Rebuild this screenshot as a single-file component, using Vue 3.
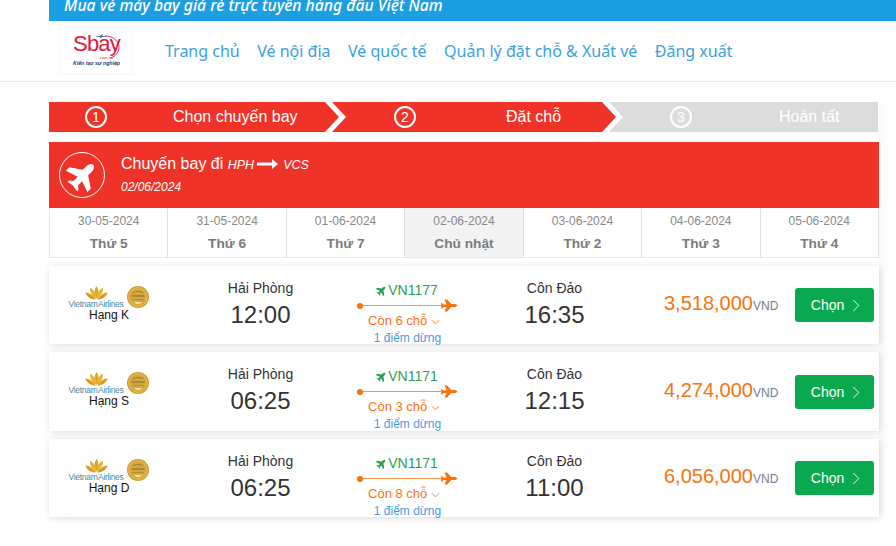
<template>
  <div class="page">
    <div class="banner">Mua vé máy bay giá rẻ trực tuyến hàng đầu Việt Nam</div>

    <header class="nav">
      <div class="logo">
        <svg class="logo-arc" viewBox="0 0 73 48" width="73" height="48">
          <path d="M45 9 C54 9 60 15 59 22 C58 27 54 30 50 31" fill="none" stroke="#e3173e" stroke-width="0.9" />
          <path d="M36 9.500l4-.5 2-1.800h1l-1 1.800 3 .1 .7-.9h.5l-.2 1.300-4 .4-1.100 1.400h-1l.5-1.400-4.400 0z" fill="#3c6a9c" />
        </svg>
        <span class="logo-name">Sbay</span>
        <span class="logo-com">com.vn</span>
        <span class="logo-sub">Kiến tạo sự nghiệp</span>
      </div>
      <a v-for="link in links" :key="link" class="nav-link">{{ link }}</a>
    </header>

    <main class="content">
      <div class="steps">
        <div class="step step-1">
          <span class="num">1</span>
          <span class="step-label">Chọn chuyến bay</span>
        </div>
        <div class="step step-2">
          <span class="num">2</span>
          <span class="step-label">Đặt chỗ</span>
        </div>
        <div class="step step-3">
          <span class="num">3</span>
          <span class="step-label">Hoàn tất</span>
        </div>
      </div>

      <section class="route">
        <div class="route-icon">
          <svg viewBox="0 0 24 24" width="33" height="33">
            <path :d="planePath" fill="#fff" transform="rotate(45 12 12)" />
          </svg>
        </div>
        <div class="route-text">
          <div class="route-title">
            Chuyến bay đi <i>HPH</i>
            <svg class="route-arrow" viewBox="0 0 21 10" width="21" height="10">
              <path d="M0 3.500h15V0l6 5-6 5V6.500H0z" fill="#fff" />
            </svg>
            <i>VCS</i>
          </div>
          <div class="route-date">02/06/2024</div>
        </div>
      </section>

      <div class="dates">
        <div v-for="d in dates" :key="d.date" class="date-cell" :class="{ active: d.active }">
          <div class="date-day">{{ d.date }}</div>
          <div class="date-name">{{ d.name }}</div>
        </div>
      </div>

      <article v-for="f in flights" :key="f.cls" class="flight">
        <div class="airline">
          <div class="airline-top">
            <div class="va">
              <svg viewBox="0 0 24 15" width="23" height="14">
                <path d="M12 0c2 3 2.600 6 1.500 9L12 14l-1.500-5C9.400 6 10 3 12 0z" fill="#e0a526" />
                <path d="M5 2c3 1 5.500 4 6.300 8l.4 4C8 12 5 8 5 2zM19 2c-3 1-5.500 4-6.300 8l-.4 4C16 12 19 8 19 2z" fill="#e8b32f" />
                <path d="M0 7c4 0 8 3 11 7.500C6 14.500 2 12 0 7zM24 7c-4 0-8 3-11 7.500C18 14.500 22 12 24 7z" fill="#d99a1e" />
              </svg>
              <span class="va-name">Vietnam Airlines</span>
            </div>
            <svg class="badge" viewBox="0 0 22 22" width="22" height="22">
              <circle cx="11" cy="11" r="11" fill="#cf9c2c" />
              <circle cx="11" cy="11" r="9.300" fill="#d5a83e" stroke="#eccb70" stroke-width="0.7" />
              <path d="M6 6.800c3-1.800 7-1.800 10 0" fill="none" stroke="#80611b" stroke-width="1" stroke-dasharray="1 .8" />
              <path d="M4.500 10h13" stroke="#95732a" stroke-width="1.200" />
              <path d="M5 13.500h12" stroke="#a98634" stroke-width="0.8" />
              <path d="M7 16h8c-1 1.500-2.500 2-4 2s-3-.5-4-2z" fill="#f4e1a4" />
            </svg>
          </div>
          <div class="class-name">Hạng {{ f.cls }}</div>
        </div>

        <div class="place">
          <div class="city">Hải Phòng</div>
          <div class="time">{{ f.from }}</div>
        </div>

        <div class="middle">
          <div class="code">
            <svg viewBox="0 0 24 24" width="11" height="11">
              <path :d="planePath" fill="#2f9e55" transform="rotate(45 12 12)" />
            </svg>
            {{ f.code }}
          </div>
          <div class="line">
            <svg viewBox="0 0 24 24" width="18" height="13" class="line-plane" preserveAspectRatio="none">
              <path :d="planePath" fill="#f7730e" transform="rotate(90 12 12)" />
            </svg>
          </div>
          <div class="seats">
            Còn {{ f.seats }} chỗ
            <svg viewBox="0 0 10 6" width="9" height="6"><path d="M1 1l4 4 4-4" fill="none" stroke="#f7730e" stroke-width="1" /></svg>
          </div>
          <div class="stops">1 điểm dừng</div>
        </div>

        <div class="place">
          <div class="city">Côn Đảo</div>
          <div class="time">{{ f.to }}</div>
        </div>

        <div class="price">{{ f.price }}<span class="cur">VND</span></div>

        <button class="pick">
          Chọn
          <svg viewBox="0 0 8 14" width="8" height="13"><path d="M1 1l6 6-6 6" fill="none" stroke="#fff" stroke-width="1" /></svg>
        </button>
      </article>
    </main>
  </div>
</template>

<script setup>
// fat plane, nose up; rotated where it's used
const planePath =
  "M12 1c1.600 0 2.800 2 2.800 4.500V9l8.200 5.500V18l-8.200-2.800v4.300l2.600 2V23L12 22l-4.400 1v-1.500l2.600-2v-4.300L1 18v-3.500L9.200 9V5.500C9.200 3 10.400 1 12 1z";

const links = ["Trang chủ", "Vé nội địa", "Vé quốc tế", "Quản lý đặt chỗ & Xuất vé", "Đăng xuất"];

const dates = [
  { date: "30-05-2024", name: "Thứ 5" },
  { date: "31-05-2024", name: "Thứ 6" },
  { date: "01-06-2024", name: "Thứ 7" },
  { date: "02-06-2024", name: "Chủ nhật", active: true },
  { date: "03-06-2024", name: "Thứ 2" },
  { date: "04-06-2024", name: "Thứ 3" },
  { date: "05-06-2024", name: "Thứ 4" },
];

const flights = [
  { cls: "K", from: "12:00", to: "16:35", code: "VN1177", seats: 6, price: "3,518,000" },
  { cls: "S", from: "06:25", to: "12:15", code: "VN1171", seats: 3, price: "4,274,000" },
  { cls: "D", from: "06:25", to: "11:00", code: "VN1171", seats: 8, price: "6,056,000" },
];
</script>

<style>
body {
  background: #fff;
  overflow: hidden;
}
</style>

<style scoped>
.page {
  width: 896px;
  height: 546px;
  overflow: hidden;
  font-family: "Liberation Sans", Arial, sans-serif;
  color: #333;
}

.banner {
  margin-left: 49px;
  height: 21px;
  padding-left: 15px;
  background: #1c9fe2;
  color: #fff;
  font-family: "Noto Sans", sans-serif;
  font-size: 15.700px;
  font-style: italic;
  font-weight: 500;
  line-height: 10px;
  box-sizing: border-box;
}

.nav {
  height: 61px;
  box-sizing: border-box;
  padding: 6px 0 0 60px;
  display: flex;
  align-items: flex-start;
  border-bottom: 1px solid #ebebeb;
}

.logo {
  position: relative;
  width: 73px;
  height: 48px;
  box-sizing: border-box;
  border: 1px solid #f6f6f6;
  margin-right: 32px;
  text-align: center;
}

.logo-arc {
  position: absolute;
  left: -1px;
  top: -1px;
}

.logo-name {
  display: block;
  margin-top: 5px;
  height: 22px;
  font-size: 22px;
  line-height: 22px;
  letter-spacing: -0.8px;
  color: #e3173e;
}

.logo-com {
  position: absolute;
  left: 39px;
  top: 27px;
  font-size: 4px;
  line-height: 5px;
  color: #e3173e;
}

.logo-sub {
  display: block;
  margin-top: 5px;
  font-size: 5.200px;
  font-weight: bold;
  line-height: 6px;
  font-style: italic;
  white-space: nowrap;
  color: #1e3c78;
}

.nav-link {
  margin-right: 17.500px;
  line-height: 48px;
  font-family: "Noto Sans", sans-serif;
  font-size: 16px;
  color: #3a9fe0;
}

.content {
  width: 830px;
  margin: 20px 0 0 49px;
  box-shadow: 9px 0 9px -2px rgba(0, 0, 0, 0.025);
}

.steps {
  display: flex;
  height: 30px;
  width: 829px;
}

.step {
  display: flex;
  flex: none;
  box-sizing: border-box;
  align-items: center;
  color: #fff;
  font-size: 16px;
  white-space: nowrap;
  background: #ef3328;
}

.step-1 {
  width: 290px;
  padding-left: 36px;
  clip-path: polygon(0 0, calc(100% - 14px) 0, 100% 50%, calc(100% - 14px) 100%, 0 100%);
}

.step-2 {
  width: 284px;
  margin-left: -7px;
  padding-left: 62px;
  clip-path: polygon(0 0, calc(100% - 14px) 0, 100% 50%, calc(100% - 14px) 100%, 0 100%, 14px 50%);
}

.step-3 {
  flex: 1;
  margin-left: -7px;
  padding-left: 61px;
  background: #dcdcdc;
  clip-path: polygon(0 0, 100% 0, 100% 100%, 0 100%, 14px 50%);
}

.step-1 .step-label {
  margin-left: 66px;
}

.step-2 .step-label {
  margin-left: 90px;
}

.step-3 .step-label {
  margin-left: 87px;
}

.num {
  width: 22px;
  height: 22px;
  box-sizing: border-box;
  border: 2px solid #fff;
  border-radius: 50%;
  text-align: center;
  font-size: 14px;
  line-height: 18px;
}

.route {
  display: flex;
  align-items: center;
  gap: 16px;
  height: 66px;
  margin-top: 10px;
  padding-left: 10px;
  background: #ef3328;
  color: #fff;
}

.route-icon {
  width: 46px;
  height: 46px;
  box-sizing: border-box;
  border: 1px solid #fff;
  border-radius: 50%;
  display: flex;
  align-items: center;
  justify-content: center;
}

.route-text {
  margin-bottom: 2px;
}

.route-title {
  font-size: 16px;
  line-height: 20px;
}

.route-title i {
  font-size: 12.500px;
}

.route-arrow {
  margin: 0 5px 0 3px;
}

.route-date {
  margin-top: 5px;
  font-size: 12px;
  font-style: italic;
  line-height: 14px;
}

.dates {
  display: grid;
  grid-template-columns: repeat(7, 1fr);
  border-left: 1px solid #e8e8e8;
  border-bottom: 1px solid #e8e8e8;
}

.date-cell {
  height: 49px;
  box-sizing: border-box;
  padding-top: 5px;
  text-align: center;
  border-right: 1px solid #e0e0e0;
}

.date-cell.active {
  background: #f3f3f3;
}

.date-day {
  font-size: 12px;
  line-height: 16px;
  color: #888;
}

.date-name {
  margin-top: 7px;
  font-size: 13.700px;
  font-weight: bold;
  line-height: 16px;
  color: #7b7b7b;
}

.flight {
  display: flex;
  align-items: flex-start;
  height: 78px;
  box-sizing: border-box;
  margin-top: 8px;
  background: #fff;
  box-shadow: 1px 1px 7px rgba(0, 0, 0, 0.14);
}

.flight:nth-of-type(2) {
  height: 79px;
}

.flight:nth-of-type(2) .price {
  padding-top: 25px;
}

.flight:nth-of-type(2) .pick {
  margin-top: 23px;
}

.airline {
  width: 120px;
  padding-top: 20px;
  text-align: center;
}

.airline-top {
  display: flex;
  justify-content: center;
  align-items: flex-start;
  gap: 4px;
  height: 22px;
}

.va {
  display: flex;
  flex-direction: column;
  align-items: center;
  width: 54px;
}

.va-name {
  margin-top: 1px;
  font-size: 8.500px;
  line-height: 7px;
  letter-spacing: -0.3px;
  word-spacing: -1px;
  white-space: nowrap;
  color: #3f8aa6;
}

.badge {
  flex: none;
}

.class-name {
  font-size: 12px;
  line-height: 14px;
  color: #111;
}

.place {
  width: 180px;
  box-sizing: border-box;
  padding: 14px 0 0 3px;
  text-align: center;
}

.place + .middle + .place {
  width: 178px;
  padding-left: 1px;
}

.city {
  font-size: 14px;
  line-height: 16px;
}

.time {
  margin-top: 3px;
  font-size: 24px;
  line-height: 32px;
}

.middle {
  width: 116px;
  padding-top: 16px;
  text-align: center;
}

.code {
  display: flex;
  justify-content: center;
  align-items: center;
  gap: 1px;
  font-size: 14px;
  line-height: 16px;
  color: #2f9e55;
}

.line {
  position: relative;
  width: 90px;
  height: 0;
  margin: 7px 0 0 8px;
  border-top: 1px solid #f7944a;
}

.line::before {
  content: "";
  position: absolute;
  left: 0;
  top: -3.500px;
  width: 6px;
  height: 6px;
  border-radius: 50%;
  background: #f7730e;
}

.line-plane {
  position: absolute;
  right: -11px;
  top: -7px;
}

.seats {
  margin-top: 7px;
  padding-right: 6px;
  font-size: 13px;
  line-height: 16px;
  color: #f7730e;
}

.stops {
  margin-top: 2px;
  padding-left: 1px;
  font-size: 12px;
  line-height: 14px;
  color: #4a9ae0;
}

.price {
  flex: 1;
  padding: 24px 0 0 21px;
  font-size: 20px;
  line-height: 26px;
  color: #f7730e;
}

.cur {
  font-size: 12px;
  color: #6f7f8f;
}

.pick {
  display: flex;
  align-items: center;
  justify-content: center;
  gap: 8px;
  width: 79px;
  height: 34px;
  margin: 22px 5px 0 0;
  padding: 0 0 0 2px;
  border: 0;
  border-radius: 3px;
  background: #0aa84f;
  color: #fff;
  font-family: inherit;
  font-size: 14px;
}
</style>
